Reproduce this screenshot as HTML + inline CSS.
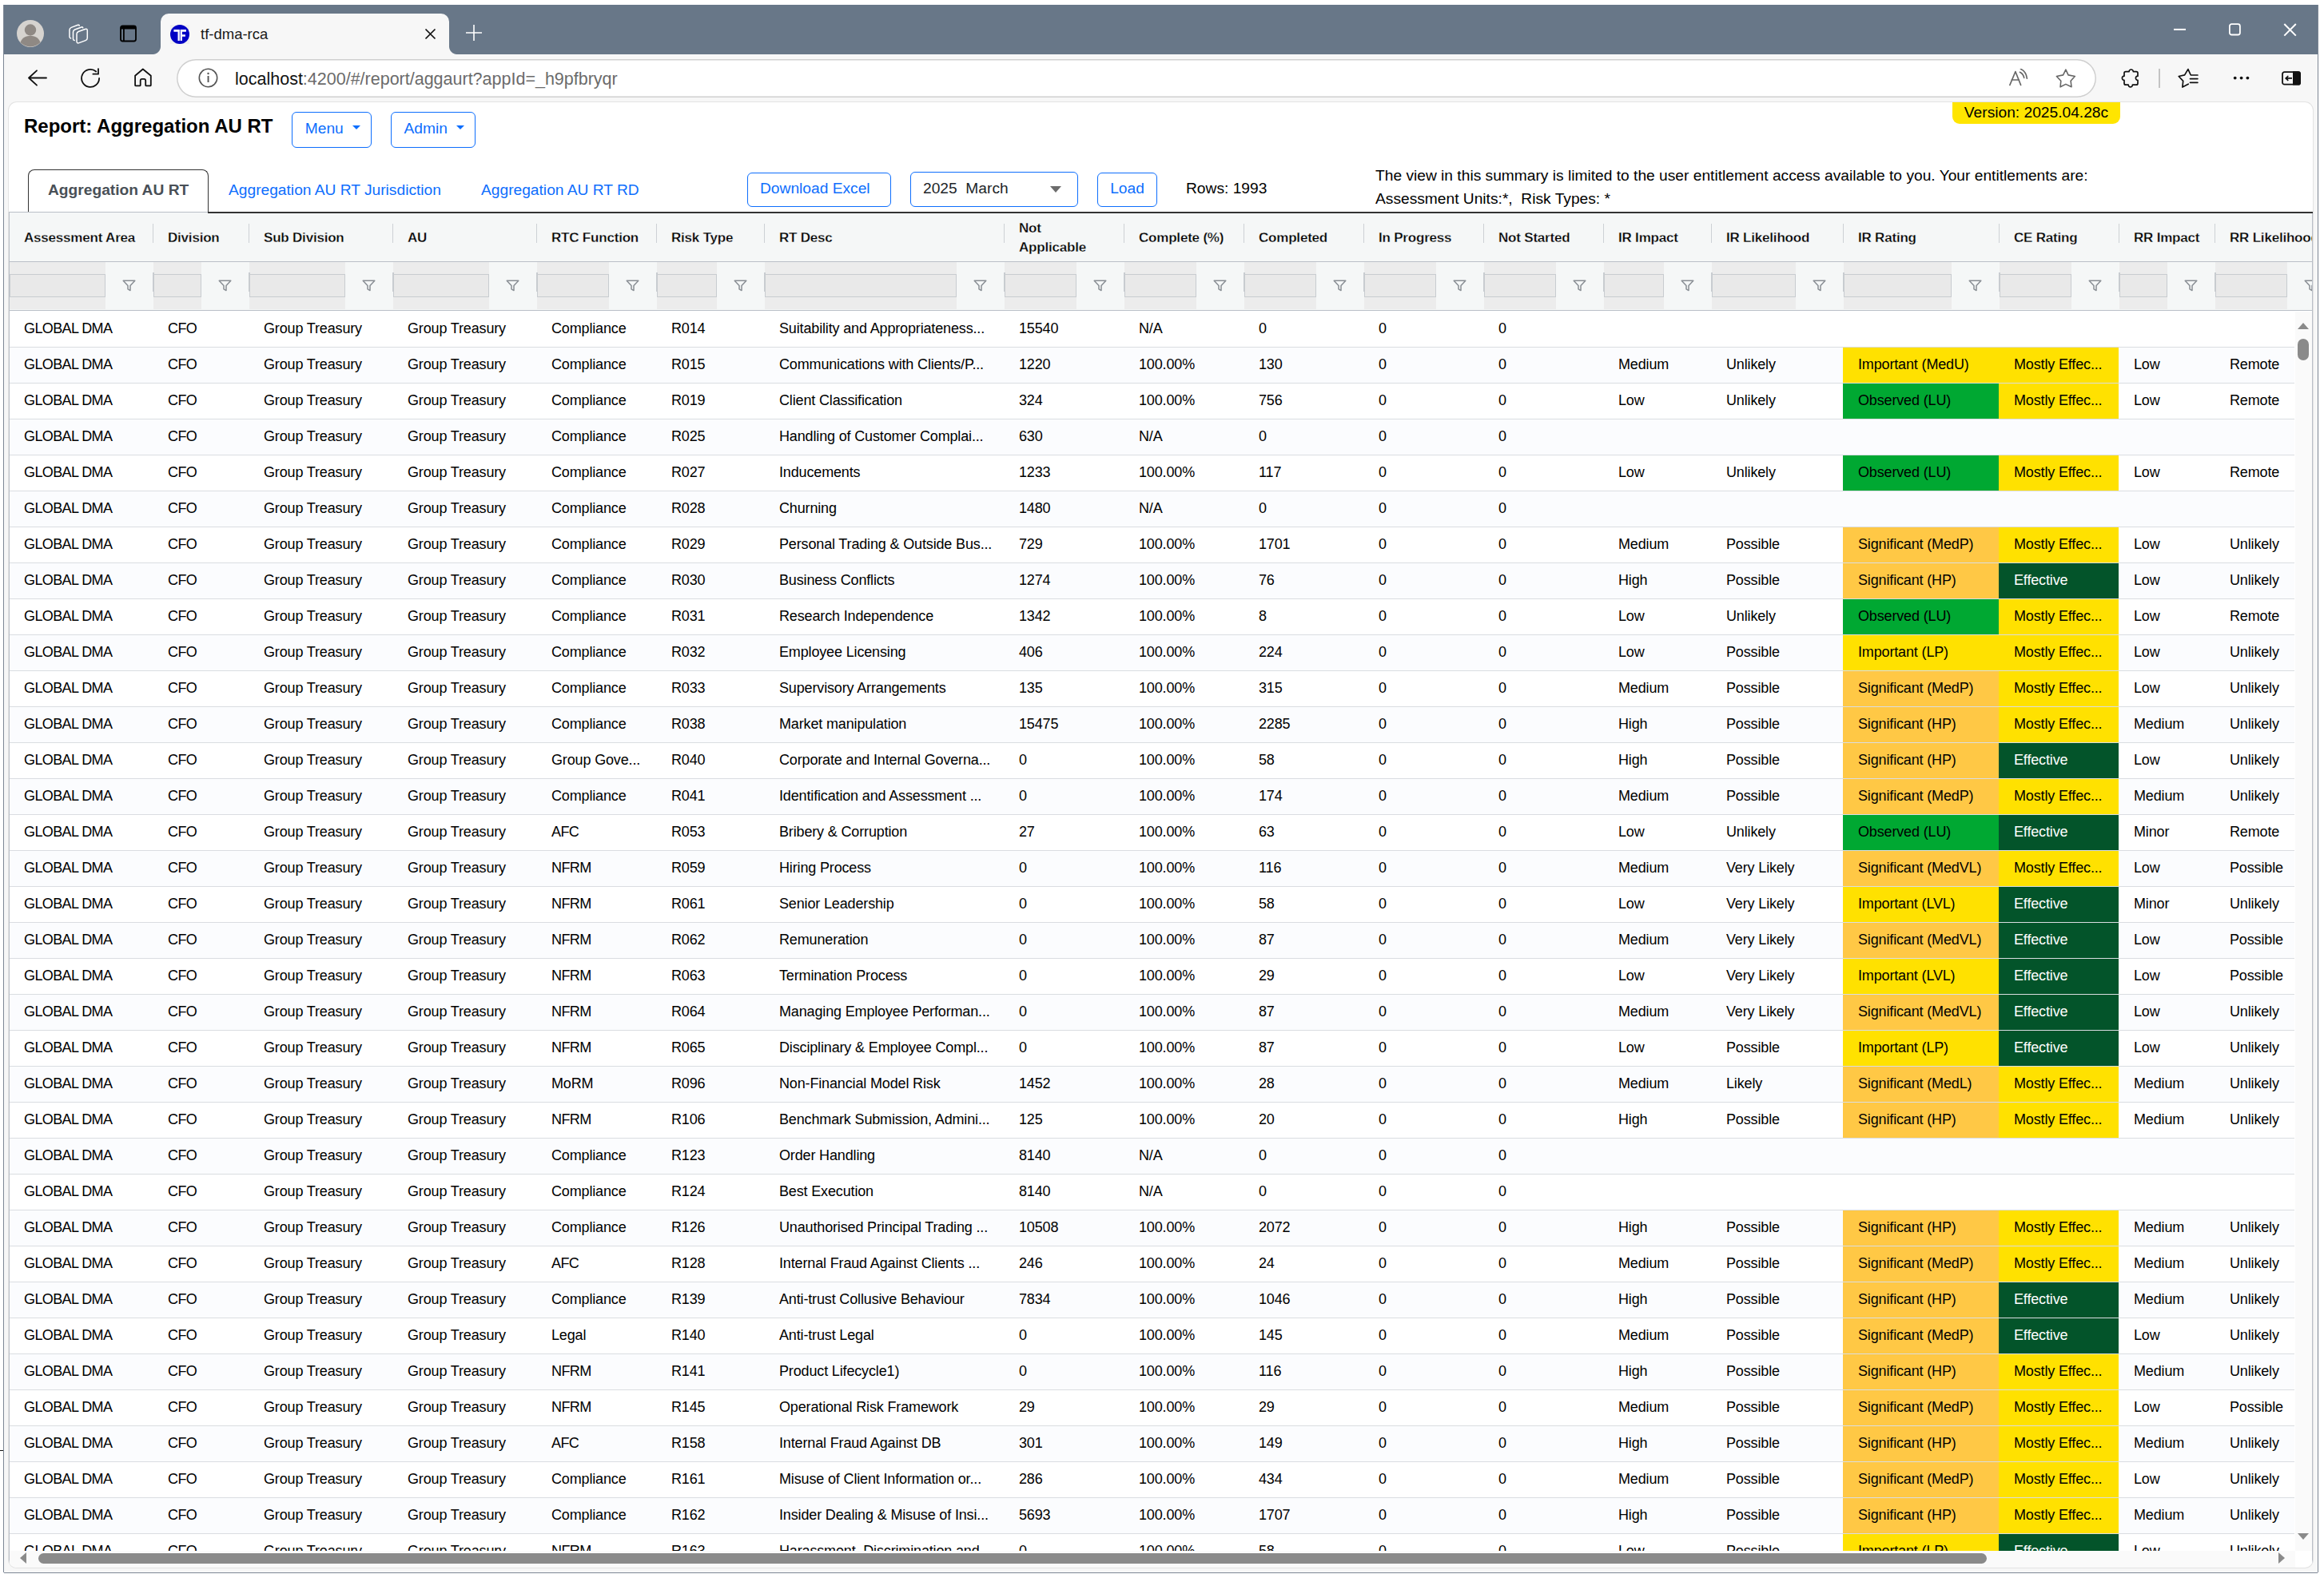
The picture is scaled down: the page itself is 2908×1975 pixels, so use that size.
<!DOCTYPE html><html><head><meta charset="utf-8"><title>tf-dma-rca</title><style>
*{box-sizing:border-box;margin:0;padding:0}
html,body{width:2908px;height:1975px;overflow:hidden;background:#fff;font-family:"Liberation Sans",sans-serif;color:#000}
.a{position:absolute}
#win{position:absolute;left:5px;top:6px;width:2895px;height:1962px;background:#f7f7f7;box-shadow:-1px 0 0 #7d8795,1px 0 0 #7d8795,0 1px 0 #7d8795;overflow:hidden}
#titlebar{position:absolute;left:0;top:0;width:2895px;height:62px;background:#687788}
#tab{position:absolute;left:196px;top:11px;width:361px;height:51px;background:#f7f7f7;border-radius:10px 10px 0 0}
#tab:before,#tab:after{content:"";position:absolute;bottom:0;width:10px;height:10px;background:radial-gradient(circle at 0 0,transparent 10px,#f7f7f7 10.5px)}
#tab:before{left:-10px;background:radial-gradient(circle at 0 0,#687788 9.5px,#f7f7f7 10.5px)}
#tab:after{right:-10px;background:radial-gradient(circle at 100% 0,#687788 9.5px,#f7f7f7 10.5px)}
#toolbar{position:absolute;left:0;top:62px;width:2895px;height:60px;background:#f7f7f7}
#url{position:absolute;left:216px;top:6px;width:2401.5px;height:47.5px;background:#fff;box-shadow:inset 0 0 0 1.5px #cfcfcf;border-radius:24px}
#card{position:absolute;left:6px;top:122px;width:2883px;height:1834px;background:#fff;box-shadow:0 0 0 1px #e3e3e3;border-radius:10px;overflow:hidden}
.btn{position:absolute;border:1.5px solid #0d6efd;border-radius:6px;color:#0d6efd;font-size:19.2px;line-height:1;display:flex;align-items:center;justify-content:center;background:#fff;padding-bottom:3px}
.caret{display:inline-block;width:0;height:0;border-left:5px solid transparent;border-right:5px solid transparent;border-top:5.5px solid #0d6efd;margin-left:11.5px;position:relative;top:-1.5px}
.t19{font-size:19.2px;line-height:1;white-space:nowrap}
#grid{position:absolute;left:0px;top:137px;width:2883px;height:1697px;overflow:hidden;border-left:1px solid #babfc7;border-right:1px solid #babfc7;border-top:1px solid #babfc7}
.hdr{position:absolute;left:-1px;top:0;width:2900px;height:62px;background:#f5f7f7;border-bottom:1.5px solid #babfc7}
.flt{position:absolute;left:-1px;top:62px;width:2900px;height:61px;background:#f5f7f7;border-bottom:1.5px solid #babfc7}
.hc{position:absolute;top:0.5px;height:62px;font-size:17px;font-weight:700;letter-spacing:-0.2px;-webkit-text-stroke:0.3px #f5f7f7;paint-order:normal;line-height:24px;display:flex;align-items:center;padding-left:19px;white-space:nowrap;color:#000}
.hs{position:absolute;top:13.5px;width:1.2px;height:24px;background:#cdd1d5}
.fb{position:absolute;top:0;height:59px;background:#ececec}
.fi{position:absolute;top:14.5px;height:29px;background:#e9e9e9;border:1.5px solid #c8ccd0}
.fs{position:absolute;top:13px;width:1.5px;height:24px;background:#c8ccd0}
.fic{position:absolute;top:21.5px;width:17px;height:15px}
.row{position:absolute;left:-1px;width:2860px;height:45px;border-bottom:1.5px solid #dadde1;background:#fff}
.row.odd{background:#fbfcfe}
.c{position:absolute;top:0;height:44px;font-size:18px;letter-spacing:-0.15px;line-height:42px;padding-left:19px;white-space:nowrap;overflow:hidden;color:#000}
.cap{letter-spacing:-0.6px}
.Y{background:#ffe100}
.O{background:#ffc845}
.G{background:#00a832}
.D{background:#03542a;color:#fff}
</style></head><body><div class="a" style="left:0;top:1815px;width:4px;height:1.2px;background:#111"></div><div id="win"><div id="titlebar"><svg class="a" style="left:15px;top:18px" width="36" height="36" viewBox="0 0 36 36"><circle cx="18" cy="18" r="17" fill="#d6d3cf"/><circle cx="18" cy="13.5" r="7.2" fill="#8f8984"/><path d="M5.5 29 C8 22.5 13 21 18 21 C23 21 28 22.5 30.5 29 A17 17 0 0 1 5.5 29Z" fill="#8f8984"/></svg><svg class="a" style="left:80px;top:22px" width="30" height="28" viewBox="0 0 30 28" fill="none" stroke="#fff" stroke-width="1.5" stroke-linejoin="round" stroke-linecap="round"><path d="M14.2 4.2 Q14 2.8 12.5 3.3 L4.2 6.4 Q2 7.2 2 9.5 V18 Q2 19.6 3.6 19.9"/><path d="M18.7 6.8 Q18.5 5.5 17 6 L8.7 9 Q6.5 9.8 6.5 12 V20.7 Q6.5 22.4 8.2 22.6"/><path d="M11 14.5 Q11 12.3 13.2 11.5 L21.5 8.5 Q24.3 7.5 24.3 10.3 V19.5 Q24.3 21.8 22.1 22.6 L14 25.6 Q11 26.7 11 23.7 Z"/></svg><svg class="a" style="left:144px;top:24px" width="24" height="24" viewBox="0 0 24 24"><rect x="2" y="2.5" width="19" height="19" rx="2.5" fill="none" stroke="#000" stroke-width="1.8"/><rect x="2" y="2.5" width="19" height="4" fill="#000"/><rect x="5" y="6" width="1.8" height="15" fill="#000"/></svg></div><div id="tab"><svg class="a" style="left:12px;top:14px" width="24" height="24" viewBox="0 0 24 24"><rect width="24" height="24" fill="#f0f0f0"/><circle cx="12" cy="12" r="12" fill="#0000c4"/><path d="M4.4 6 H11.8 V20 H9.5 V8.8 H4.4 Z M12.6 6 H19.9 V8.8 H14.9 V12.2 H18.9 V14.8 H14.9 V20 H12.6 Z" fill="#fff"/></svg><div class="a" style="left:50px;top:14px;font-size:18.5px;line-height:24px;color:#1a1a1a">tf-dma-rca</div><svg class="a" style="left:330px;top:18px" width="15" height="15" viewBox="0 0 15 15"><path d="M1.5 1.5 L13.5 13.5 M13.5 1.5 L1.5 13.5" stroke="#111" stroke-width="1.7"/></svg></div><svg class="a" style="left:577px;top:24px" width="22" height="22" viewBox="0 0 22 22"><path d="M11 1 V21 M1 11 H21" stroke="#fff" stroke-width="1.6"/></svg><svg class="a" style="left:2714px;top:23px" width="17" height="16" viewBox="0 0 17 16"><path d="M1 7.9 H16" stroke="#fff" stroke-width="2"/></svg><svg class="a" style="left:2784px;top:23px" width="16" height="17" viewBox="0 0 16 17"><rect x="0.9" y="1.2" width="13" height="13.3" rx="2.5" fill="none" stroke="#fff" stroke-width="1.8"/></svg><svg class="a" style="left:2852px;top:23px" width="17" height="17" viewBox="0 0 17 17"><path d="M6.3 7.2 L20.8 21.8 M20.8 7.2 L6.3 21.8" transform="translate(-5,-6.2)" stroke="#fff" stroke-width="2"/></svg><div id="toolbar"><svg class="a" style="left:29px;top:17.5px" width="26" height="24" viewBox="0 0 26 24" fill="none" stroke="#111" stroke-width="1.8" stroke-linecap="round" stroke-linejoin="round"><path d="M24 11.5 H2 M12 2.3 L2 11.5 L12 20.7"/></svg><svg class="a" style="left:95px;top:16px" width="28" height="28" viewBox="0 0 28 28" fill="none" stroke="#111" stroke-width="1.8" stroke-linecap="round" stroke-linejoin="round"><path d="M24.1 13.9 A11 11 0 1 1 20.2 5.5"/><path d="M23 2.1 V8.7 H16.4"/></svg><svg class="a" style="left:161px;top:16px" width="25" height="25" viewBox="0 0 25 25" fill="none" stroke="#111" stroke-width="1.8" stroke-linejoin="round"><path d="M3.1 10.7 L12.8 2.5 L22.8 10.7 V22.4 Q22.8 23.4 21.8 23.4 H17.2 Q16.2 23.4 16.2 22.4 V16.9 Q16.2 14.9 14.2 14.9 H11.7 Q9.7 14.9 9.7 16.9 V22.4 Q9.7 23.4 8.7 23.4 H4.1 Q3.1 23.4 3.1 22.4 Z"/></svg><div id="url"><svg class="a" style="left:26.5px;top:11px" width="25" height="25" viewBox="0 0 25 25"><circle cx="12.5" cy="12.5" r="11.2" fill="none" stroke="#555" stroke-width="1.6"/><rect x="11.6" y="10" width="1.9" height="8" fill="#555"/><circle cx="12.55" cy="7" r="1.2" fill="#555"/></svg><div class="a" style="left:73px;top:12px;font-size:21.5px;line-height:26px;color:#111;white-space:nowrap">localhost<span style="color:#6b6b6b">:4200/#/report/aggaurt?appId=_h9pfbryqr</span></div><svg class="a" style="left:2293px;top:12px" width="26" height="24" viewBox="0 0 26 24" fill="none" stroke="#666" stroke-width="1.6" stroke-linejoin="round" stroke-linecap="round"><path d="M0.9 20.4 L7.9 3.6 L14.6 20.4 M3 14 H12.5"/><path d="M13.4 4.3 Q17.8 6.5 18.7 11.4"/><path d="M14.4 0.3 Q21.3 3.3 22.4 12.3"/></svg><svg class="a" style="left:2351px;top:11px" width="26" height="26" viewBox="0 0 26 26" fill="none" stroke="#666" stroke-width="1.6" stroke-linejoin="round"><path d="M12.9 2.2 L16 8.9 L24.3 10.5 L19.1 16.2 L20 23.8 L12.9 20.4 L6.1 23.8 L6.8 16.2 L1.4 10.5 L9.6 8.9 Z"/></svg></div><svg class="a" style="left:2647px;top:16px" width="26" height="28" viewBox="0 0 26 28" fill="none" stroke="#111" stroke-width="1.7" stroke-linejoin="round"><path d="M8 5.6 H12.1 A2.6 2.6 0 1 1 17.3 5.6 H21 Q23 5.6 23 7.6 V11.2 A2.6 2.6 0 1 0 23 16.4 V20.2 Q23 22.2 21 22.2 H16.4 A2.6 2.6 0 1 1 11.2 22.2 H8 Q6 22.2 6 20.2 V16.4 A2.6 2.6 0 1 1 6 11.2 V7.6 Q6 5.6 8 5.6 Z"/></svg><div class="a" style="left:2696px;top:18px;width:1.5px;height:24px;background:#c4c4c4"></div><svg class="a" style="left:2717px;top:16px" width="30" height="28" viewBox="0 0 30 28" fill="none" stroke="#111" stroke-width="1.7" stroke-linejoin="round" stroke-linecap="round"><path d="M16.2 21.2 L8.9 25.1 L9.7 17.3 L4.2 11.5 L11.6 9.9 L15.9 2.6 L19.3 10 H27.9 M18.5 14.6 H27.9 M18.5 19.3 H27.9"/></svg><svg class="a" style="left:2787px;top:26px" width="24" height="8" viewBox="0 0 24 8"><circle cx="4.7" cy="3.6" r="1.9" fill="#111"/><circle cx="12.6" cy="3.6" r="1.9" fill="#111"/><circle cx="20.4" cy="3.6" r="1.9" fill="#111"/></svg><svg class="a" style="left:2850px;top:21px" width="26" height="20" viewBox="0 0 26 20"><rect x="1" y="1.2" width="22" height="15.5" rx="2.5" fill="none" stroke="#111" stroke-width="1.8"/><path d="M14.9 1.2 H21 Q23 1.2 23 3.2 V14.7 Q23 16.7 21 16.7 H14.9 Z" fill="#111" stroke="#111" stroke-width="1.8"/><path d="M13 8.9 H5.5 M8.3 6 L5.2 8.9 L8.3 11.8" fill="none" stroke="#111" stroke-width="1.7"/></svg></div><div id="card"><div class="a" style="left:2432px;top:-1px;width:210px;height:28px;background:#ffe500;border-radius:0 0 9px 9px;font-size:19.2px;line-height:28px;text-align:center;white-space:nowrap">Version: 2025.04.28c</div><div class="a" style="left:19px;top:15px;font-size:24px;font-weight:700;line-height:30px;white-space:nowrap">Report: Aggregation AU RT</div><div class="btn" style="left:354px;top:12px;width:100px;height:45px;padding-left:3px">Menu<span class="caret"></span></div><div class="btn" style="left:478px;top:12px;width:106px;height:45px;padding-left:3px">Admin<span class="caret"></span></div><div class="a" style="left:24px;top:84px;width:226px;height:53px;border:1.5px solid #333;border-bottom:none;border-radius:8px 8px 0 0;background:#fff;font-size:19.2px;font-weight:700;color:#495057;line-height:50px;padding-left:24px;white-space:nowrap;z-index:2">Aggregation AU RT</div><div class="a" style="left:249px;top:137px;width:2650px;height:1.5px;background:#333;z-index:3"></div><div class="a t19" style="left:275px;top:100px;color:#0d6efd">Aggregation AU RT Jurisdiction</div><div class="a t19" style="left:591px;top:100px;color:#0d6efd">Aggregation AU RT RD</div><div class="btn" style="left:924px;top:88px;width:180px;height:43px;justify-content:flex-start;padding-left:15px">Download Excel</div><div class="a" style="left:1128px;top:87px;width:210px;height:44px;border:1.5px solid #0d6efd;border-radius:6px;background:#fff"><div class="a t19" style="left:15px;top:10px;color:#212529;white-space:pre">2025  March</div><div class="a" style="left:174px;top:17px;width:0;height:0;border-left:7px solid transparent;border-right:7px solid transparent;border-top:8px solid #6c6c6c"></div></div><div class="btn" style="left:1362px;top:88px;width:75px;height:43px">Load</div><div class="a t19" style="left:1473px;top:98px">Rows: 1993</div><div class="a t19" style="left:1710px;top:82px">The view in this summary is limited to the user entitlement access available to you. Your entitlements are:</div><div class="a t19" style="left:1710px;top:111px;white-space:pre">Assessment Units:*,  Risk Types: *</div><div id="grid"><div class="hdr"><div class="hc" style="left:0px;width:180px">Assessment Area</div><div class="hc" style="left:180px;width:120px">Division</div><div class="hs" style="left:180px"></div><div class="hc" style="left:300px;width:180px">Sub Division</div><div class="hs" style="left:300px"></div><div class="hc" style="left:480px;width:180px">AU</div><div class="hs" style="left:480px"></div><div class="hc" style="left:660px;width:150px">RTC Function</div><div class="hs" style="left:660px"></div><div class="hc" style="left:810px;width:135px">Risk Type</div><div class="hs" style="left:810px"></div><div class="hc" style="left:945px;width:300px">RT Desc</div><div class="hs" style="left:945px"></div><div class="hc" style="left:1245px;width:150px">Not<br>Applicable</div><div class="hs" style="left:1245px"></div><div class="hc" style="left:1395px;width:150px">Complete (%)</div><div class="hs" style="left:1395px"></div><div class="hc" style="left:1545px;width:150px">Completed</div><div class="hs" style="left:1545px"></div><div class="hc" style="left:1695px;width:150px">In Progress</div><div class="hs" style="left:1695px"></div><div class="hc" style="left:1845px;width:150px">Not Started</div><div class="hs" style="left:1845px"></div><div class="hc" style="left:1995px;width:135px">IR Impact</div><div class="hs" style="left:1995px"></div><div class="hc" style="left:2130px;width:165px">IR Likelihood</div><div class="hs" style="left:2130px"></div><div class="hc" style="left:2295px;width:195px">IR Rating</div><div class="hs" style="left:2295px"></div><div class="hc" style="left:2490px;width:150px">CE Rating</div><div class="hs" style="left:2490px"></div><div class="hc" style="left:2640px;width:120px">RR Impact</div><div class="hs" style="left:2640px"></div><div class="hc" style="left:2760px;width:150px">RR Likelihood</div><div class="hs" style="left:2760px"></div></div><div class="flt"><div class="fb" style="left:1px;width:120px"></div><div class="fi" style="left:1px;width:120px"></div><svg class="fic" style="left:142px" viewBox="0 0 17 15"><path d="M1.2 1.2 H15.8 L10 7.6 V13.6 L7 11.8 V7.6 Z" fill="none" stroke="#898e94" stroke-width="1.5" stroke-linejoin="round"/></svg><div class="fb" style="left:181px;width:60px"></div><div class="fi" style="left:181px;width:60px"></div><div class="fs" style="left:180px"></div><svg class="fic" style="left:262px" viewBox="0 0 17 15"><path d="M1.2 1.2 H15.8 L10 7.6 V13.6 L7 11.8 V7.6 Z" fill="none" stroke="#898e94" stroke-width="1.5" stroke-linejoin="round"/></svg><div class="fb" style="left:301px;width:120px"></div><div class="fi" style="left:301px;width:120px"></div><div class="fs" style="left:300px"></div><svg class="fic" style="left:442px" viewBox="0 0 17 15"><path d="M1.2 1.2 H15.8 L10 7.6 V13.6 L7 11.8 V7.6 Z" fill="none" stroke="#898e94" stroke-width="1.5" stroke-linejoin="round"/></svg><div class="fb" style="left:481px;width:120px"></div><div class="fi" style="left:481px;width:120px"></div><div class="fs" style="left:480px"></div><svg class="fic" style="left:622px" viewBox="0 0 17 15"><path d="M1.2 1.2 H15.8 L10 7.6 V13.6 L7 11.8 V7.6 Z" fill="none" stroke="#898e94" stroke-width="1.5" stroke-linejoin="round"/></svg><div class="fb" style="left:661px;width:90px"></div><div class="fi" style="left:661px;width:90px"></div><div class="fs" style="left:660px"></div><svg class="fic" style="left:772px" viewBox="0 0 17 15"><path d="M1.2 1.2 H15.8 L10 7.6 V13.6 L7 11.8 V7.6 Z" fill="none" stroke="#898e94" stroke-width="1.5" stroke-linejoin="round"/></svg><div class="fb" style="left:811px;width:75px"></div><div class="fi" style="left:811px;width:75px"></div><div class="fs" style="left:810px"></div><svg class="fic" style="left:907px" viewBox="0 0 17 15"><path d="M1.2 1.2 H15.8 L10 7.6 V13.6 L7 11.8 V7.6 Z" fill="none" stroke="#898e94" stroke-width="1.5" stroke-linejoin="round"/></svg><div class="fb" style="left:946px;width:240px"></div><div class="fi" style="left:946px;width:240px"></div><div class="fs" style="left:945px"></div><svg class="fic" style="left:1207px" viewBox="0 0 17 15"><path d="M1.2 1.2 H15.8 L10 7.6 V13.6 L7 11.8 V7.6 Z" fill="none" stroke="#898e94" stroke-width="1.5" stroke-linejoin="round"/></svg><div class="fb" style="left:1246px;width:90px"></div><div class="fi" style="left:1246px;width:90px"></div><div class="fs" style="left:1245px"></div><svg class="fic" style="left:1357px" viewBox="0 0 17 15"><path d="M1.2 1.2 H15.8 L10 7.6 V13.6 L7 11.8 V7.6 Z" fill="none" stroke="#898e94" stroke-width="1.5" stroke-linejoin="round"/></svg><div class="fb" style="left:1396px;width:90px"></div><div class="fi" style="left:1396px;width:90px"></div><div class="fs" style="left:1395px"></div><svg class="fic" style="left:1507px" viewBox="0 0 17 15"><path d="M1.2 1.2 H15.8 L10 7.6 V13.6 L7 11.8 V7.6 Z" fill="none" stroke="#898e94" stroke-width="1.5" stroke-linejoin="round"/></svg><div class="fb" style="left:1546px;width:90px"></div><div class="fi" style="left:1546px;width:90px"></div><div class="fs" style="left:1545px"></div><svg class="fic" style="left:1657px" viewBox="0 0 17 15"><path d="M1.2 1.2 H15.8 L10 7.6 V13.6 L7 11.8 V7.6 Z" fill="none" stroke="#898e94" stroke-width="1.5" stroke-linejoin="round"/></svg><div class="fb" style="left:1696px;width:90px"></div><div class="fi" style="left:1696px;width:90px"></div><div class="fs" style="left:1695px"></div><svg class="fic" style="left:1807px" viewBox="0 0 17 15"><path d="M1.2 1.2 H15.8 L10 7.6 V13.6 L7 11.8 V7.6 Z" fill="none" stroke="#898e94" stroke-width="1.5" stroke-linejoin="round"/></svg><div class="fb" style="left:1846px;width:90px"></div><div class="fi" style="left:1846px;width:90px"></div><div class="fs" style="left:1845px"></div><svg class="fic" style="left:1957px" viewBox="0 0 17 15"><path d="M1.2 1.2 H15.8 L10 7.6 V13.6 L7 11.8 V7.6 Z" fill="none" stroke="#898e94" stroke-width="1.5" stroke-linejoin="round"/></svg><div class="fb" style="left:1996px;width:75px"></div><div class="fi" style="left:1996px;width:75px"></div><div class="fs" style="left:1995px"></div><svg class="fic" style="left:2092px" viewBox="0 0 17 15"><path d="M1.2 1.2 H15.8 L10 7.6 V13.6 L7 11.8 V7.6 Z" fill="none" stroke="#898e94" stroke-width="1.5" stroke-linejoin="round"/></svg><div class="fb" style="left:2131px;width:105px"></div><div class="fi" style="left:2131px;width:105px"></div><div class="fs" style="left:2130px"></div><svg class="fic" style="left:2257px" viewBox="0 0 17 15"><path d="M1.2 1.2 H15.8 L10 7.6 V13.6 L7 11.8 V7.6 Z" fill="none" stroke="#898e94" stroke-width="1.5" stroke-linejoin="round"/></svg><div class="fb" style="left:2296px;width:135px"></div><div class="fi" style="left:2296px;width:135px"></div><div class="fs" style="left:2295px"></div><svg class="fic" style="left:2452px" viewBox="0 0 17 15"><path d="M1.2 1.2 H15.8 L10 7.6 V13.6 L7 11.8 V7.6 Z" fill="none" stroke="#898e94" stroke-width="1.5" stroke-linejoin="round"/></svg><div class="fb" style="left:2491px;width:90px"></div><div class="fi" style="left:2491px;width:90px"></div><div class="fs" style="left:2490px"></div><svg class="fic" style="left:2602px" viewBox="0 0 17 15"><path d="M1.2 1.2 H15.8 L10 7.6 V13.6 L7 11.8 V7.6 Z" fill="none" stroke="#898e94" stroke-width="1.5" stroke-linejoin="round"/></svg><div class="fb" style="left:2641px;width:60px"></div><div class="fi" style="left:2641px;width:60px"></div><div class="fs" style="left:2640px"></div><svg class="fic" style="left:2722px" viewBox="0 0 17 15"><path d="M1.2 1.2 H15.8 L10 7.6 V13.6 L7 11.8 V7.6 Z" fill="none" stroke="#898e94" stroke-width="1.5" stroke-linejoin="round"/></svg><div class="fb" style="left:2761px;width:90px"></div><div class="fi" style="left:2761px;width:90px"></div><div class="fs" style="left:2760px"></div><svg class="fic" style="left:2872px" viewBox="0 0 17 15"><path d="M1.2 1.2 H15.8 L10 7.6 V13.6 L7 11.8 V7.6 Z" fill="none" stroke="#898e94" stroke-width="1.5" stroke-linejoin="round"/></svg></div><div class="row" style="top:124px"><div class="c cap" style="left:0px;width:180px">GLOBAL DMA</div><div class="c cap" style="left:180px;width:120px">CFO</div><div class="c" style="left:300px;width:180px">Group Treasury</div><div class="c" style="left:480px;width:180px">Group Treasury</div><div class="c" style="left:660px;width:150px">Compliance</div><div class="c" style="left:810px;width:135px">R014</div><div class="c" style="left:945px;width:300px">Suitability and Appropriateness...</div><div class="c" style="left:1245px;width:150px">15540</div><div class="c" style="left:1395px;width:150px">N/A</div><div class="c" style="left:1545px;width:150px">0</div><div class="c" style="left:1695px;width:150px">0</div><div class="c" style="left:1845px;width:150px">0</div></div><div class="row odd" style="top:169px"><div class="c cap" style="left:0px;width:180px">GLOBAL DMA</div><div class="c cap" style="left:180px;width:120px">CFO</div><div class="c" style="left:300px;width:180px">Group Treasury</div><div class="c" style="left:480px;width:180px">Group Treasury</div><div class="c" style="left:660px;width:150px">Compliance</div><div class="c" style="left:810px;width:135px">R015</div><div class="c" style="left:945px;width:300px">Communications with Clients/P...</div><div class="c" style="left:1245px;width:150px">1220</div><div class="c" style="left:1395px;width:150px">100.00%</div><div class="c" style="left:1545px;width:150px">130</div><div class="c" style="left:1695px;width:150px">0</div><div class="c" style="left:1845px;width:150px">0</div><div class="c" style="left:1995px;width:135px">Medium</div><div class="c" style="left:2130px;width:165px">Unlikely</div><div class="c Y" style="left:2295px;width:195px">Important (MedU)</div><div class="c Y" style="left:2490px;width:150px">Mostly Effec...</div><div class="c" style="left:2640px;width:120px">Low</div><div class="c" style="left:2760px;width:150px">Remote</div></div><div class="row" style="top:214px"><div class="c cap" style="left:0px;width:180px">GLOBAL DMA</div><div class="c cap" style="left:180px;width:120px">CFO</div><div class="c" style="left:300px;width:180px">Group Treasury</div><div class="c" style="left:480px;width:180px">Group Treasury</div><div class="c" style="left:660px;width:150px">Compliance</div><div class="c" style="left:810px;width:135px">R019</div><div class="c" style="left:945px;width:300px">Client Classification</div><div class="c" style="left:1245px;width:150px">324</div><div class="c" style="left:1395px;width:150px">100.00%</div><div class="c" style="left:1545px;width:150px">756</div><div class="c" style="left:1695px;width:150px">0</div><div class="c" style="left:1845px;width:150px">0</div><div class="c" style="left:1995px;width:135px">Low</div><div class="c" style="left:2130px;width:165px">Unlikely</div><div class="c G" style="left:2295px;width:195px">Observed (LU)</div><div class="c Y" style="left:2490px;width:150px">Mostly Effec...</div><div class="c" style="left:2640px;width:120px">Low</div><div class="c" style="left:2760px;width:150px">Remote</div></div><div class="row odd" style="top:259px"><div class="c cap" style="left:0px;width:180px">GLOBAL DMA</div><div class="c cap" style="left:180px;width:120px">CFO</div><div class="c" style="left:300px;width:180px">Group Treasury</div><div class="c" style="left:480px;width:180px">Group Treasury</div><div class="c" style="left:660px;width:150px">Compliance</div><div class="c" style="left:810px;width:135px">R025</div><div class="c" style="left:945px;width:300px">Handling of Customer Complai...</div><div class="c" style="left:1245px;width:150px">630</div><div class="c" style="left:1395px;width:150px">N/A</div><div class="c" style="left:1545px;width:150px">0</div><div class="c" style="left:1695px;width:150px">0</div><div class="c" style="left:1845px;width:150px">0</div></div><div class="row" style="top:304px"><div class="c cap" style="left:0px;width:180px">GLOBAL DMA</div><div class="c cap" style="left:180px;width:120px">CFO</div><div class="c" style="left:300px;width:180px">Group Treasury</div><div class="c" style="left:480px;width:180px">Group Treasury</div><div class="c" style="left:660px;width:150px">Compliance</div><div class="c" style="left:810px;width:135px">R027</div><div class="c" style="left:945px;width:300px">Inducements</div><div class="c" style="left:1245px;width:150px">1233</div><div class="c" style="left:1395px;width:150px">100.00%</div><div class="c" style="left:1545px;width:150px">117</div><div class="c" style="left:1695px;width:150px">0</div><div class="c" style="left:1845px;width:150px">0</div><div class="c" style="left:1995px;width:135px">Low</div><div class="c" style="left:2130px;width:165px">Unlikely</div><div class="c G" style="left:2295px;width:195px">Observed (LU)</div><div class="c Y" style="left:2490px;width:150px">Mostly Effec...</div><div class="c" style="left:2640px;width:120px">Low</div><div class="c" style="left:2760px;width:150px">Remote</div></div><div class="row odd" style="top:349px"><div class="c cap" style="left:0px;width:180px">GLOBAL DMA</div><div class="c cap" style="left:180px;width:120px">CFO</div><div class="c" style="left:300px;width:180px">Group Treasury</div><div class="c" style="left:480px;width:180px">Group Treasury</div><div class="c" style="left:660px;width:150px">Compliance</div><div class="c" style="left:810px;width:135px">R028</div><div class="c" style="left:945px;width:300px">Churning</div><div class="c" style="left:1245px;width:150px">1480</div><div class="c" style="left:1395px;width:150px">N/A</div><div class="c" style="left:1545px;width:150px">0</div><div class="c" style="left:1695px;width:150px">0</div><div class="c" style="left:1845px;width:150px">0</div></div><div class="row" style="top:394px"><div class="c cap" style="left:0px;width:180px">GLOBAL DMA</div><div class="c cap" style="left:180px;width:120px">CFO</div><div class="c" style="left:300px;width:180px">Group Treasury</div><div class="c" style="left:480px;width:180px">Group Treasury</div><div class="c" style="left:660px;width:150px">Compliance</div><div class="c" style="left:810px;width:135px">R029</div><div class="c" style="left:945px;width:300px">Personal Trading &amp; Outside Bus...</div><div class="c" style="left:1245px;width:150px">729</div><div class="c" style="left:1395px;width:150px">100.00%</div><div class="c" style="left:1545px;width:150px">1701</div><div class="c" style="left:1695px;width:150px">0</div><div class="c" style="left:1845px;width:150px">0</div><div class="c" style="left:1995px;width:135px">Medium</div><div class="c" style="left:2130px;width:165px">Possible</div><div class="c O" style="left:2295px;width:195px">Significant (MedP)</div><div class="c Y" style="left:2490px;width:150px">Mostly Effec...</div><div class="c" style="left:2640px;width:120px">Low</div><div class="c" style="left:2760px;width:150px">Unlikely</div></div><div class="row odd" style="top:439px"><div class="c cap" style="left:0px;width:180px">GLOBAL DMA</div><div class="c cap" style="left:180px;width:120px">CFO</div><div class="c" style="left:300px;width:180px">Group Treasury</div><div class="c" style="left:480px;width:180px">Group Treasury</div><div class="c" style="left:660px;width:150px">Compliance</div><div class="c" style="left:810px;width:135px">R030</div><div class="c" style="left:945px;width:300px">Business Conflicts</div><div class="c" style="left:1245px;width:150px">1274</div><div class="c" style="left:1395px;width:150px">100.00%</div><div class="c" style="left:1545px;width:150px">76</div><div class="c" style="left:1695px;width:150px">0</div><div class="c" style="left:1845px;width:150px">0</div><div class="c" style="left:1995px;width:135px">High</div><div class="c" style="left:2130px;width:165px">Possible</div><div class="c O" style="left:2295px;width:195px">Significant (HP)</div><div class="c D" style="left:2490px;width:150px">Effective</div><div class="c" style="left:2640px;width:120px">Low</div><div class="c" style="left:2760px;width:150px">Unlikely</div></div><div class="row" style="top:484px"><div class="c cap" style="left:0px;width:180px">GLOBAL DMA</div><div class="c cap" style="left:180px;width:120px">CFO</div><div class="c" style="left:300px;width:180px">Group Treasury</div><div class="c" style="left:480px;width:180px">Group Treasury</div><div class="c" style="left:660px;width:150px">Compliance</div><div class="c" style="left:810px;width:135px">R031</div><div class="c" style="left:945px;width:300px">Research Independence</div><div class="c" style="left:1245px;width:150px">1342</div><div class="c" style="left:1395px;width:150px">100.00%</div><div class="c" style="left:1545px;width:150px">8</div><div class="c" style="left:1695px;width:150px">0</div><div class="c" style="left:1845px;width:150px">0</div><div class="c" style="left:1995px;width:135px">Low</div><div class="c" style="left:2130px;width:165px">Unlikely</div><div class="c G" style="left:2295px;width:195px">Observed (LU)</div><div class="c Y" style="left:2490px;width:150px">Mostly Effec...</div><div class="c" style="left:2640px;width:120px">Low</div><div class="c" style="left:2760px;width:150px">Remote</div></div><div class="row odd" style="top:529px"><div class="c cap" style="left:0px;width:180px">GLOBAL DMA</div><div class="c cap" style="left:180px;width:120px">CFO</div><div class="c" style="left:300px;width:180px">Group Treasury</div><div class="c" style="left:480px;width:180px">Group Treasury</div><div class="c" style="left:660px;width:150px">Compliance</div><div class="c" style="left:810px;width:135px">R032</div><div class="c" style="left:945px;width:300px">Employee Licensing</div><div class="c" style="left:1245px;width:150px">406</div><div class="c" style="left:1395px;width:150px">100.00%</div><div class="c" style="left:1545px;width:150px">224</div><div class="c" style="left:1695px;width:150px">0</div><div class="c" style="left:1845px;width:150px">0</div><div class="c" style="left:1995px;width:135px">Low</div><div class="c" style="left:2130px;width:165px">Possible</div><div class="c Y" style="left:2295px;width:195px">Important (LP)</div><div class="c Y" style="left:2490px;width:150px">Mostly Effec...</div><div class="c" style="left:2640px;width:120px">Low</div><div class="c" style="left:2760px;width:150px">Unlikely</div></div><div class="row" style="top:574px"><div class="c cap" style="left:0px;width:180px">GLOBAL DMA</div><div class="c cap" style="left:180px;width:120px">CFO</div><div class="c" style="left:300px;width:180px">Group Treasury</div><div class="c" style="left:480px;width:180px">Group Treasury</div><div class="c" style="left:660px;width:150px">Compliance</div><div class="c" style="left:810px;width:135px">R033</div><div class="c" style="left:945px;width:300px">Supervisory Arrangements</div><div class="c" style="left:1245px;width:150px">135</div><div class="c" style="left:1395px;width:150px">100.00%</div><div class="c" style="left:1545px;width:150px">315</div><div class="c" style="left:1695px;width:150px">0</div><div class="c" style="left:1845px;width:150px">0</div><div class="c" style="left:1995px;width:135px">Medium</div><div class="c" style="left:2130px;width:165px">Possible</div><div class="c O" style="left:2295px;width:195px">Significant (MedP)</div><div class="c Y" style="left:2490px;width:150px">Mostly Effec...</div><div class="c" style="left:2640px;width:120px">Low</div><div class="c" style="left:2760px;width:150px">Unlikely</div></div><div class="row odd" style="top:619px"><div class="c cap" style="left:0px;width:180px">GLOBAL DMA</div><div class="c cap" style="left:180px;width:120px">CFO</div><div class="c" style="left:300px;width:180px">Group Treasury</div><div class="c" style="left:480px;width:180px">Group Treasury</div><div class="c" style="left:660px;width:150px">Compliance</div><div class="c" style="left:810px;width:135px">R038</div><div class="c" style="left:945px;width:300px">Market manipulation</div><div class="c" style="left:1245px;width:150px">15475</div><div class="c" style="left:1395px;width:150px">100.00%</div><div class="c" style="left:1545px;width:150px">2285</div><div class="c" style="left:1695px;width:150px">0</div><div class="c" style="left:1845px;width:150px">0</div><div class="c" style="left:1995px;width:135px">High</div><div class="c" style="left:2130px;width:165px">Possible</div><div class="c O" style="left:2295px;width:195px">Significant (HP)</div><div class="c Y" style="left:2490px;width:150px">Mostly Effec...</div><div class="c" style="left:2640px;width:120px">Medium</div><div class="c" style="left:2760px;width:150px">Unlikely</div></div><div class="row" style="top:664px"><div class="c cap" style="left:0px;width:180px">GLOBAL DMA</div><div class="c cap" style="left:180px;width:120px">CFO</div><div class="c" style="left:300px;width:180px">Group Treasury</div><div class="c" style="left:480px;width:180px">Group Treasury</div><div class="c" style="left:660px;width:150px">Group Gove...</div><div class="c" style="left:810px;width:135px">R040</div><div class="c" style="left:945px;width:300px">Corporate and Internal Governa...</div><div class="c" style="left:1245px;width:150px">0</div><div class="c" style="left:1395px;width:150px">100.00%</div><div class="c" style="left:1545px;width:150px">58</div><div class="c" style="left:1695px;width:150px">0</div><div class="c" style="left:1845px;width:150px">0</div><div class="c" style="left:1995px;width:135px">High</div><div class="c" style="left:2130px;width:165px">Possible</div><div class="c O" style="left:2295px;width:195px">Significant (HP)</div><div class="c D" style="left:2490px;width:150px">Effective</div><div class="c" style="left:2640px;width:120px">Low</div><div class="c" style="left:2760px;width:150px">Unlikely</div></div><div class="row odd" style="top:709px"><div class="c cap" style="left:0px;width:180px">GLOBAL DMA</div><div class="c cap" style="left:180px;width:120px">CFO</div><div class="c" style="left:300px;width:180px">Group Treasury</div><div class="c" style="left:480px;width:180px">Group Treasury</div><div class="c" style="left:660px;width:150px">Compliance</div><div class="c" style="left:810px;width:135px">R041</div><div class="c" style="left:945px;width:300px">Identification and Assessment ...</div><div class="c" style="left:1245px;width:150px">0</div><div class="c" style="left:1395px;width:150px">100.00%</div><div class="c" style="left:1545px;width:150px">174</div><div class="c" style="left:1695px;width:150px">0</div><div class="c" style="left:1845px;width:150px">0</div><div class="c" style="left:1995px;width:135px">Medium</div><div class="c" style="left:2130px;width:165px">Possible</div><div class="c O" style="left:2295px;width:195px">Significant (MedP)</div><div class="c Y" style="left:2490px;width:150px">Mostly Effec...</div><div class="c" style="left:2640px;width:120px">Medium</div><div class="c" style="left:2760px;width:150px">Unlikely</div></div><div class="row" style="top:754px"><div class="c cap" style="left:0px;width:180px">GLOBAL DMA</div><div class="c cap" style="left:180px;width:120px">CFO</div><div class="c" style="left:300px;width:180px">Group Treasury</div><div class="c" style="left:480px;width:180px">Group Treasury</div><div class="c cap" style="left:660px;width:150px">AFC</div><div class="c" style="left:810px;width:135px">R053</div><div class="c" style="left:945px;width:300px">Bribery &amp; Corruption</div><div class="c" style="left:1245px;width:150px">27</div><div class="c" style="left:1395px;width:150px">100.00%</div><div class="c" style="left:1545px;width:150px">63</div><div class="c" style="left:1695px;width:150px">0</div><div class="c" style="left:1845px;width:150px">0</div><div class="c" style="left:1995px;width:135px">Low</div><div class="c" style="left:2130px;width:165px">Unlikely</div><div class="c G" style="left:2295px;width:195px">Observed (LU)</div><div class="c D" style="left:2490px;width:150px">Effective</div><div class="c" style="left:2640px;width:120px">Minor</div><div class="c" style="left:2760px;width:150px">Remote</div></div><div class="row odd" style="top:799px"><div class="c cap" style="left:0px;width:180px">GLOBAL DMA</div><div class="c cap" style="left:180px;width:120px">CFO</div><div class="c" style="left:300px;width:180px">Group Treasury</div><div class="c" style="left:480px;width:180px">Group Treasury</div><div class="c cap" style="left:660px;width:150px">NFRM</div><div class="c" style="left:810px;width:135px">R059</div><div class="c" style="left:945px;width:300px">Hiring Process</div><div class="c" style="left:1245px;width:150px">0</div><div class="c" style="left:1395px;width:150px">100.00%</div><div class="c" style="left:1545px;width:150px">116</div><div class="c" style="left:1695px;width:150px">0</div><div class="c" style="left:1845px;width:150px">0</div><div class="c" style="left:1995px;width:135px">Medium</div><div class="c" style="left:2130px;width:165px">Very Likely</div><div class="c O" style="left:2295px;width:195px">Significant (MedVL)</div><div class="c Y" style="left:2490px;width:150px">Mostly Effec...</div><div class="c" style="left:2640px;width:120px">Low</div><div class="c" style="left:2760px;width:150px">Possible</div></div><div class="row" style="top:844px"><div class="c cap" style="left:0px;width:180px">GLOBAL DMA</div><div class="c cap" style="left:180px;width:120px">CFO</div><div class="c" style="left:300px;width:180px">Group Treasury</div><div class="c" style="left:480px;width:180px">Group Treasury</div><div class="c cap" style="left:660px;width:150px">NFRM</div><div class="c" style="left:810px;width:135px">R061</div><div class="c" style="left:945px;width:300px">Senior Leadership</div><div class="c" style="left:1245px;width:150px">0</div><div class="c" style="left:1395px;width:150px">100.00%</div><div class="c" style="left:1545px;width:150px">58</div><div class="c" style="left:1695px;width:150px">0</div><div class="c" style="left:1845px;width:150px">0</div><div class="c" style="left:1995px;width:135px">Low</div><div class="c" style="left:2130px;width:165px">Very Likely</div><div class="c Y" style="left:2295px;width:195px">Important (LVL)</div><div class="c D" style="left:2490px;width:150px">Effective</div><div class="c" style="left:2640px;width:120px">Minor</div><div class="c" style="left:2760px;width:150px">Unlikely</div></div><div class="row odd" style="top:889px"><div class="c cap" style="left:0px;width:180px">GLOBAL DMA</div><div class="c cap" style="left:180px;width:120px">CFO</div><div class="c" style="left:300px;width:180px">Group Treasury</div><div class="c" style="left:480px;width:180px">Group Treasury</div><div class="c cap" style="left:660px;width:150px">NFRM</div><div class="c" style="left:810px;width:135px">R062</div><div class="c" style="left:945px;width:300px">Remuneration</div><div class="c" style="left:1245px;width:150px">0</div><div class="c" style="left:1395px;width:150px">100.00%</div><div class="c" style="left:1545px;width:150px">87</div><div class="c" style="left:1695px;width:150px">0</div><div class="c" style="left:1845px;width:150px">0</div><div class="c" style="left:1995px;width:135px">Medium</div><div class="c" style="left:2130px;width:165px">Very Likely</div><div class="c O" style="left:2295px;width:195px">Significant (MedVL)</div><div class="c D" style="left:2490px;width:150px">Effective</div><div class="c" style="left:2640px;width:120px">Low</div><div class="c" style="left:2760px;width:150px">Possible</div></div><div class="row" style="top:934px"><div class="c cap" style="left:0px;width:180px">GLOBAL DMA</div><div class="c cap" style="left:180px;width:120px">CFO</div><div class="c" style="left:300px;width:180px">Group Treasury</div><div class="c" style="left:480px;width:180px">Group Treasury</div><div class="c cap" style="left:660px;width:150px">NFRM</div><div class="c" style="left:810px;width:135px">R063</div><div class="c" style="left:945px;width:300px">Termination Process</div><div class="c" style="left:1245px;width:150px">0</div><div class="c" style="left:1395px;width:150px">100.00%</div><div class="c" style="left:1545px;width:150px">29</div><div class="c" style="left:1695px;width:150px">0</div><div class="c" style="left:1845px;width:150px">0</div><div class="c" style="left:1995px;width:135px">Low</div><div class="c" style="left:2130px;width:165px">Very Likely</div><div class="c Y" style="left:2295px;width:195px">Important (LVL)</div><div class="c D" style="left:2490px;width:150px">Effective</div><div class="c" style="left:2640px;width:120px">Low</div><div class="c" style="left:2760px;width:150px">Possible</div></div><div class="row odd" style="top:979px"><div class="c cap" style="left:0px;width:180px">GLOBAL DMA</div><div class="c cap" style="left:180px;width:120px">CFO</div><div class="c" style="left:300px;width:180px">Group Treasury</div><div class="c" style="left:480px;width:180px">Group Treasury</div><div class="c cap" style="left:660px;width:150px">NFRM</div><div class="c" style="left:810px;width:135px">R064</div><div class="c" style="left:945px;width:300px">Managing Employee Performan...</div><div class="c" style="left:1245px;width:150px">0</div><div class="c" style="left:1395px;width:150px">100.00%</div><div class="c" style="left:1545px;width:150px">87</div><div class="c" style="left:1695px;width:150px">0</div><div class="c" style="left:1845px;width:150px">0</div><div class="c" style="left:1995px;width:135px">Medium</div><div class="c" style="left:2130px;width:165px">Very Likely</div><div class="c O" style="left:2295px;width:195px">Significant (MedVL)</div><div class="c D" style="left:2490px;width:150px">Effective</div><div class="c" style="left:2640px;width:120px">Low</div><div class="c" style="left:2760px;width:150px">Unlikely</div></div><div class="row" style="top:1024px"><div class="c cap" style="left:0px;width:180px">GLOBAL DMA</div><div class="c cap" style="left:180px;width:120px">CFO</div><div class="c" style="left:300px;width:180px">Group Treasury</div><div class="c" style="left:480px;width:180px">Group Treasury</div><div class="c cap" style="left:660px;width:150px">NFRM</div><div class="c" style="left:810px;width:135px">R065</div><div class="c" style="left:945px;width:300px">Disciplinary &amp; Employee Compl...</div><div class="c" style="left:1245px;width:150px">0</div><div class="c" style="left:1395px;width:150px">100.00%</div><div class="c" style="left:1545px;width:150px">87</div><div class="c" style="left:1695px;width:150px">0</div><div class="c" style="left:1845px;width:150px">0</div><div class="c" style="left:1995px;width:135px">Low</div><div class="c" style="left:2130px;width:165px">Possible</div><div class="c Y" style="left:2295px;width:195px">Important (LP)</div><div class="c D" style="left:2490px;width:150px">Effective</div><div class="c" style="left:2640px;width:120px">Low</div><div class="c" style="left:2760px;width:150px">Unlikely</div></div><div class="row odd" style="top:1069px"><div class="c cap" style="left:0px;width:180px">GLOBAL DMA</div><div class="c cap" style="left:180px;width:120px">CFO</div><div class="c" style="left:300px;width:180px">Group Treasury</div><div class="c" style="left:480px;width:180px">Group Treasury</div><div class="c" style="left:660px;width:150px">MoRM</div><div class="c" style="left:810px;width:135px">R096</div><div class="c" style="left:945px;width:300px">Non-Financial Model Risk</div><div class="c" style="left:1245px;width:150px">1452</div><div class="c" style="left:1395px;width:150px">100.00%</div><div class="c" style="left:1545px;width:150px">28</div><div class="c" style="left:1695px;width:150px">0</div><div class="c" style="left:1845px;width:150px">0</div><div class="c" style="left:1995px;width:135px">Medium</div><div class="c" style="left:2130px;width:165px">Likely</div><div class="c O" style="left:2295px;width:195px">Significant (MedL)</div><div class="c Y" style="left:2490px;width:150px">Mostly Effec...</div><div class="c" style="left:2640px;width:120px">Medium</div><div class="c" style="left:2760px;width:150px">Unlikely</div></div><div class="row" style="top:1114px"><div class="c cap" style="left:0px;width:180px">GLOBAL DMA</div><div class="c cap" style="left:180px;width:120px">CFO</div><div class="c" style="left:300px;width:180px">Group Treasury</div><div class="c" style="left:480px;width:180px">Group Treasury</div><div class="c cap" style="left:660px;width:150px">NFRM</div><div class="c" style="left:810px;width:135px">R106</div><div class="c" style="left:945px;width:300px">Benchmark Submission, Admini...</div><div class="c" style="left:1245px;width:150px">125</div><div class="c" style="left:1395px;width:150px">100.00%</div><div class="c" style="left:1545px;width:150px">20</div><div class="c" style="left:1695px;width:150px">0</div><div class="c" style="left:1845px;width:150px">0</div><div class="c" style="left:1995px;width:135px">High</div><div class="c" style="left:2130px;width:165px">Possible</div><div class="c O" style="left:2295px;width:195px">Significant (HP)</div><div class="c Y" style="left:2490px;width:150px">Mostly Effec...</div><div class="c" style="left:2640px;width:120px">Medium</div><div class="c" style="left:2760px;width:150px">Unlikely</div></div><div class="row odd" style="top:1159px"><div class="c cap" style="left:0px;width:180px">GLOBAL DMA</div><div class="c cap" style="left:180px;width:120px">CFO</div><div class="c" style="left:300px;width:180px">Group Treasury</div><div class="c" style="left:480px;width:180px">Group Treasury</div><div class="c" style="left:660px;width:150px">Compliance</div><div class="c" style="left:810px;width:135px">R123</div><div class="c" style="left:945px;width:300px">Order Handling</div><div class="c" style="left:1245px;width:150px">8140</div><div class="c" style="left:1395px;width:150px">N/A</div><div class="c" style="left:1545px;width:150px">0</div><div class="c" style="left:1695px;width:150px">0</div><div class="c" style="left:1845px;width:150px">0</div></div><div class="row" style="top:1204px"><div class="c cap" style="left:0px;width:180px">GLOBAL DMA</div><div class="c cap" style="left:180px;width:120px">CFO</div><div class="c" style="left:300px;width:180px">Group Treasury</div><div class="c" style="left:480px;width:180px">Group Treasury</div><div class="c" style="left:660px;width:150px">Compliance</div><div class="c" style="left:810px;width:135px">R124</div><div class="c" style="left:945px;width:300px">Best Execution</div><div class="c" style="left:1245px;width:150px">8140</div><div class="c" style="left:1395px;width:150px">N/A</div><div class="c" style="left:1545px;width:150px">0</div><div class="c" style="left:1695px;width:150px">0</div><div class="c" style="left:1845px;width:150px">0</div></div><div class="row odd" style="top:1249px"><div class="c cap" style="left:0px;width:180px">GLOBAL DMA</div><div class="c cap" style="left:180px;width:120px">CFO</div><div class="c" style="left:300px;width:180px">Group Treasury</div><div class="c" style="left:480px;width:180px">Group Treasury</div><div class="c" style="left:660px;width:150px">Compliance</div><div class="c" style="left:810px;width:135px">R126</div><div class="c" style="left:945px;width:300px">Unauthorised Principal Trading ...</div><div class="c" style="left:1245px;width:150px">10508</div><div class="c" style="left:1395px;width:150px">100.00%</div><div class="c" style="left:1545px;width:150px">2072</div><div class="c" style="left:1695px;width:150px">0</div><div class="c" style="left:1845px;width:150px">0</div><div class="c" style="left:1995px;width:135px">High</div><div class="c" style="left:2130px;width:165px">Possible</div><div class="c O" style="left:2295px;width:195px">Significant (HP)</div><div class="c Y" style="left:2490px;width:150px">Mostly Effec...</div><div class="c" style="left:2640px;width:120px">Medium</div><div class="c" style="left:2760px;width:150px">Unlikely</div></div><div class="row" style="top:1294px"><div class="c cap" style="left:0px;width:180px">GLOBAL DMA</div><div class="c cap" style="left:180px;width:120px">CFO</div><div class="c" style="left:300px;width:180px">Group Treasury</div><div class="c" style="left:480px;width:180px">Group Treasury</div><div class="c cap" style="left:660px;width:150px">AFC</div><div class="c" style="left:810px;width:135px">R128</div><div class="c" style="left:945px;width:300px">Internal Fraud Against Clients ...</div><div class="c" style="left:1245px;width:150px">246</div><div class="c" style="left:1395px;width:150px">100.00%</div><div class="c" style="left:1545px;width:150px">24</div><div class="c" style="left:1695px;width:150px">0</div><div class="c" style="left:1845px;width:150px">0</div><div class="c" style="left:1995px;width:135px">Medium</div><div class="c" style="left:2130px;width:165px">Possible</div><div class="c O" style="left:2295px;width:195px">Significant (MedP)</div><div class="c Y" style="left:2490px;width:150px">Mostly Effec...</div><div class="c" style="left:2640px;width:120px">Medium</div><div class="c" style="left:2760px;width:150px">Unlikely</div></div><div class="row odd" style="top:1339px"><div class="c cap" style="left:0px;width:180px">GLOBAL DMA</div><div class="c cap" style="left:180px;width:120px">CFO</div><div class="c" style="left:300px;width:180px">Group Treasury</div><div class="c" style="left:480px;width:180px">Group Treasury</div><div class="c" style="left:660px;width:150px">Compliance</div><div class="c" style="left:810px;width:135px">R139</div><div class="c" style="left:945px;width:300px">Anti-trust Collusive Behaviour</div><div class="c" style="left:1245px;width:150px">7834</div><div class="c" style="left:1395px;width:150px">100.00%</div><div class="c" style="left:1545px;width:150px">1046</div><div class="c" style="left:1695px;width:150px">0</div><div class="c" style="left:1845px;width:150px">0</div><div class="c" style="left:1995px;width:135px">High</div><div class="c" style="left:2130px;width:165px">Possible</div><div class="c O" style="left:2295px;width:195px">Significant (HP)</div><div class="c D" style="left:2490px;width:150px">Effective</div><div class="c" style="left:2640px;width:120px">Medium</div><div class="c" style="left:2760px;width:150px">Unlikely</div></div><div class="row" style="top:1384px"><div class="c cap" style="left:0px;width:180px">GLOBAL DMA</div><div class="c cap" style="left:180px;width:120px">CFO</div><div class="c" style="left:300px;width:180px">Group Treasury</div><div class="c" style="left:480px;width:180px">Group Treasury</div><div class="c" style="left:660px;width:150px">Legal</div><div class="c" style="left:810px;width:135px">R140</div><div class="c" style="left:945px;width:300px">Anti-trust Legal</div><div class="c" style="left:1245px;width:150px">0</div><div class="c" style="left:1395px;width:150px">100.00%</div><div class="c" style="left:1545px;width:150px">145</div><div class="c" style="left:1695px;width:150px">0</div><div class="c" style="left:1845px;width:150px">0</div><div class="c" style="left:1995px;width:135px">Medium</div><div class="c" style="left:2130px;width:165px">Possible</div><div class="c O" style="left:2295px;width:195px">Significant (MedP)</div><div class="c D" style="left:2490px;width:150px">Effective</div><div class="c" style="left:2640px;width:120px">Low</div><div class="c" style="left:2760px;width:150px">Unlikely</div></div><div class="row odd" style="top:1429px"><div class="c cap" style="left:0px;width:180px">GLOBAL DMA</div><div class="c cap" style="left:180px;width:120px">CFO</div><div class="c" style="left:300px;width:180px">Group Treasury</div><div class="c" style="left:480px;width:180px">Group Treasury</div><div class="c cap" style="left:660px;width:150px">NFRM</div><div class="c" style="left:810px;width:135px">R141</div><div class="c" style="left:945px;width:300px">Product Lifecycle1)</div><div class="c" style="left:1245px;width:150px">0</div><div class="c" style="left:1395px;width:150px">100.00%</div><div class="c" style="left:1545px;width:150px">116</div><div class="c" style="left:1695px;width:150px">0</div><div class="c" style="left:1845px;width:150px">0</div><div class="c" style="left:1995px;width:135px">High</div><div class="c" style="left:2130px;width:165px">Possible</div><div class="c O" style="left:2295px;width:195px">Significant (HP)</div><div class="c Y" style="left:2490px;width:150px">Mostly Effec...</div><div class="c" style="left:2640px;width:120px">Medium</div><div class="c" style="left:2760px;width:150px">Unlikely</div></div><div class="row" style="top:1474px"><div class="c cap" style="left:0px;width:180px">GLOBAL DMA</div><div class="c cap" style="left:180px;width:120px">CFO</div><div class="c" style="left:300px;width:180px">Group Treasury</div><div class="c" style="left:480px;width:180px">Group Treasury</div><div class="c cap" style="left:660px;width:150px">NFRM</div><div class="c" style="left:810px;width:135px">R145</div><div class="c" style="left:945px;width:300px">Operational Risk Framework</div><div class="c" style="left:1245px;width:150px">29</div><div class="c" style="left:1395px;width:150px">100.00%</div><div class="c" style="left:1545px;width:150px">29</div><div class="c" style="left:1695px;width:150px">0</div><div class="c" style="left:1845px;width:150px">0</div><div class="c" style="left:1995px;width:135px">Medium</div><div class="c" style="left:2130px;width:165px">Possible</div><div class="c O" style="left:2295px;width:195px">Significant (MedP)</div><div class="c Y" style="left:2490px;width:150px">Mostly Effec...</div><div class="c" style="left:2640px;width:120px">Low</div><div class="c" style="left:2760px;width:150px">Possible</div></div><div class="row odd" style="top:1519px"><div class="c cap" style="left:0px;width:180px">GLOBAL DMA</div><div class="c cap" style="left:180px;width:120px">CFO</div><div class="c" style="left:300px;width:180px">Group Treasury</div><div class="c" style="left:480px;width:180px">Group Treasury</div><div class="c cap" style="left:660px;width:150px">AFC</div><div class="c" style="left:810px;width:135px">R158</div><div class="c" style="left:945px;width:300px">Internal Fraud Against DB</div><div class="c" style="left:1245px;width:150px">301</div><div class="c" style="left:1395px;width:150px">100.00%</div><div class="c" style="left:1545px;width:150px">149</div><div class="c" style="left:1695px;width:150px">0</div><div class="c" style="left:1845px;width:150px">0</div><div class="c" style="left:1995px;width:135px">High</div><div class="c" style="left:2130px;width:165px">Possible</div><div class="c O" style="left:2295px;width:195px">Significant (HP)</div><div class="c Y" style="left:2490px;width:150px">Mostly Effec...</div><div class="c" style="left:2640px;width:120px">Medium</div><div class="c" style="left:2760px;width:150px">Unlikely</div></div><div class="row" style="top:1564px"><div class="c cap" style="left:0px;width:180px">GLOBAL DMA</div><div class="c cap" style="left:180px;width:120px">CFO</div><div class="c" style="left:300px;width:180px">Group Treasury</div><div class="c" style="left:480px;width:180px">Group Treasury</div><div class="c" style="left:660px;width:150px">Compliance</div><div class="c" style="left:810px;width:135px">R161</div><div class="c" style="left:945px;width:300px">Misuse of Client Information or...</div><div class="c" style="left:1245px;width:150px">286</div><div class="c" style="left:1395px;width:150px">100.00%</div><div class="c" style="left:1545px;width:150px">434</div><div class="c" style="left:1695px;width:150px">0</div><div class="c" style="left:1845px;width:150px">0</div><div class="c" style="left:1995px;width:135px">Medium</div><div class="c" style="left:2130px;width:165px">Possible</div><div class="c O" style="left:2295px;width:195px">Significant (MedP)</div><div class="c Y" style="left:2490px;width:150px">Mostly Effec...</div><div class="c" style="left:2640px;width:120px">Low</div><div class="c" style="left:2760px;width:150px">Unlikely</div></div><div class="row odd" style="top:1609px"><div class="c cap" style="left:0px;width:180px">GLOBAL DMA</div><div class="c cap" style="left:180px;width:120px">CFO</div><div class="c" style="left:300px;width:180px">Group Treasury</div><div class="c" style="left:480px;width:180px">Group Treasury</div><div class="c" style="left:660px;width:150px">Compliance</div><div class="c" style="left:810px;width:135px">R162</div><div class="c" style="left:945px;width:300px">Insider Dealing &amp; Misuse of Insi...</div><div class="c" style="left:1245px;width:150px">5693</div><div class="c" style="left:1395px;width:150px">100.00%</div><div class="c" style="left:1545px;width:150px">1707</div><div class="c" style="left:1695px;width:150px">0</div><div class="c" style="left:1845px;width:150px">0</div><div class="c" style="left:1995px;width:135px">High</div><div class="c" style="left:2130px;width:165px">Possible</div><div class="c O" style="left:2295px;width:195px">Significant (HP)</div><div class="c Y" style="left:2490px;width:150px">Mostly Effec...</div><div class="c" style="left:2640px;width:120px">Medium</div><div class="c" style="left:2760px;width:150px">Unlikely</div></div><div class="row" style="top:1654px"><div class="c cap" style="left:0px;width:180px">GLOBAL DMA</div><div class="c cap" style="left:180px;width:120px">CFO</div><div class="c" style="left:300px;width:180px">Group Treasury</div><div class="c" style="left:480px;width:180px">Group Treasury</div><div class="c cap" style="left:660px;width:150px">NFRM</div><div class="c" style="left:810px;width:135px">R163</div><div class="c" style="left:945px;width:300px">Harassment, Discrimination and...</div><div class="c" style="left:1245px;width:150px">0</div><div class="c" style="left:1395px;width:150px">100.00%</div><div class="c" style="left:1545px;width:150px">58</div><div class="c" style="left:1695px;width:150px">0</div><div class="c" style="left:1845px;width:150px">0</div><div class="c" style="left:1995px;width:135px">Low</div><div class="c" style="left:2130px;width:165px">Possible</div><div class="c Y" style="left:2295px;width:195px">Important (LP)</div><div class="c D" style="left:2490px;width:150px">Effective</div><div class="c" style="left:2640px;width:120px">Low</div><div class="c" style="left:2760px;width:150px">Unlikely</div></div><div class="a" style="left:2860px;top:124px;width:22px;height:1551px;background:#fafafa"></div><div class="a" style="left:2862.5px;top:138px;width:0;height:0;border-left:7.5px solid transparent;border-right:7.5px solid transparent;border-bottom:8px solid #8a8a8a"></div><div class="a" style="left:2863px;top:158px;width:14px;height:27px;border-radius:7px;background:#8a8a8a"></div><div class="a" style="left:2862.5px;top:1653px;width:0;height:0;border-left:7.5px solid transparent;border-right:7.5px solid transparent;border-top:8px solid #8a8a8a"></div><div class="a" style="left:0;top:1675px;width:2860px;height:22px;background:#fafafa"></div><div class="a" style="left:13px;top:1677px;width:0;height:0;border-top:7.5px solid transparent;border-bottom:7.5px solid transparent;border-right:8.5px solid #8a8a8a"></div><div class="a" style="left:36px;top:1678px;width:2438px;height:13px;border-radius:7px;background:#8a8a8a"></div><div class="a" style="left:2839px;top:1677px;width:0;height:0;border-top:7.5px solid transparent;border-bottom:7.5px solid transparent;border-left:8.5px solid #8a8a8a"></div></div></div></div></body></html>
